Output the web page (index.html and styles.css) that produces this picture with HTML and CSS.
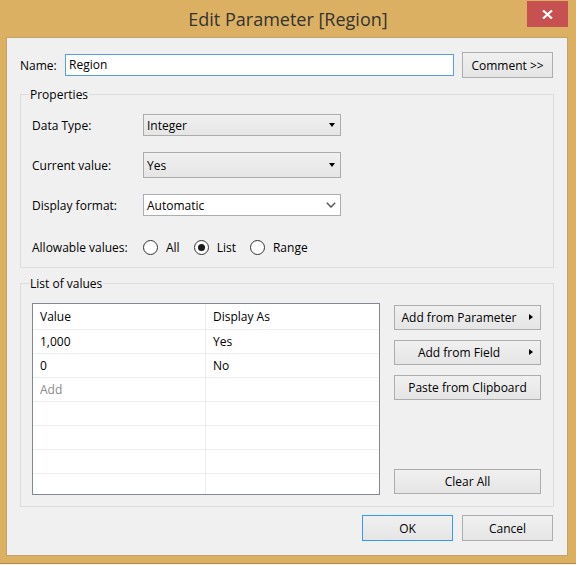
FILE: index.html
```html
<!DOCTYPE html>
<html lang="en">
<head>
    <meta charset="UTF-8">
    <title>Edit Parameter [Region]</title>
    <link rel="stylesheet" href="styles.css">
</head>
<body>
    <div class="window">
        <div class="titlebar">
            <span></span>
            <h1 class="title">Edit Parameter [Region]</h1>
            <div class="caption">
                <div class="close">
                    <svg width="11" height="9" viewBox="0 0 11 9">
                        <path d="M1 0.5 L10 8.5 M10 0.5 L1 8.5" stroke="#fff" stroke-width="2.2" fill="none"/>
                    </svg>
                </div>
            </div>
        </div>

        <div class="client">
            <div class="name-row">
                <span class="name-label">Name:</span>
                <div class="text-input">Region</div>
                <div class="btn comment-btn">Comment &gt;&gt;</div>
            </div>

            <div class="group props">
                <span class="group-title">Properties</span>
                <div class="field row-1">
                    <span class="field-label">Data Type:</span>
                    <div class="select">Integer<i class="caret"></i></div>
                </div>
                <div class="field row-2">
                    <span class="field-label">Current value:</span>
                    <div class="select tall">Yes<i class="caret"></i></div>
                </div>
                <div class="field row-3">
                    <span class="field-label">Display format:</span>
                    <div class="select combo">Automatic
                        <svg class="chevron" width="10" height="6" viewBox="0 0 10 6">
                            <path d="M0.8 0.8 L5 5 L9.2 0.8" stroke="#5a5a5a" stroke-width="1.5" fill="none"/>
                        </svg>
                    </div>
                </div>
                <div class="field row-4">
                    <span class="field-label">Allowable values:</span>
                    <div class="radios">
                        <span class="radio-item"><i class="radio"></i>All</span>
                        <span class="radio-item"><i class="radio checked"></i>List</span>
                        <span class="radio-item"><i class="radio"></i>Range</span>
                    </div>
                </div>
            </div>

            <div class="group values">
                <span class="group-title">List of values</span>
                <div class="grid">
                    <div class="grid-row head">
                        <span class="cell">Value</span>
                        <span class="cell">Display As</span>
                    </div>
                    <div class="grid-row">
                        <span class="cell">1,000</span>
                        <span class="cell">Yes</span>
                    </div>
                    <div class="grid-row">
                        <span class="cell">0</span>
                        <span class="cell">No</span>
                    </div>
                    <div class="grid-row">
                        <span class="cell hint">Add</span>
                        <span class="cell"></span>
                    </div>
                    <div class="grid-row"><span class="cell"></span><span class="cell"></span></div>
                    <div class="grid-row"><span class="cell"></span><span class="cell"></span></div>
                    <div class="grid-row"><span class="cell"></span><span class="cell"></span></div>
                    <div class="grid-row"><span class="cell"></span><span class="cell"></span></div>
                </div>
                <div class="side-buttons">
                    <div class="btn menu-btn">Add from Parameter<i class="arrow"></i></div>
                    <div class="btn menu-btn">Add from Field<i class="arrow"></i></div>
                    <div class="btn">Paste from Clipboard</div>
                    <div class="btn clear-btn">Clear All</div>
                </div>
            </div>

            <div class="footer">
                <div class="btn dialog-btn default">OK</div>
                <div class="btn dialog-btn">Cancel</div>
            </div>
        </div>
    </div>
</body>
</html>
```

FILE: styles.css
```css
* {
    box-sizing: border-box;
}
body {
    margin: 0;
    background: #f7f7f7;
    font-family: "Open Sans", "Noto Sans", sans-serif;
    font-size: 12px;
    color: #000;
}
.window {
    width: 576px;
    height: 564px;
    background: #dcb062;
    border-bottom: 1px solid #b08a4c;
}

/* title bar */
.titlebar {
    height: 37px;
    display: grid;
    grid-template-columns: 1fr auto 1fr;
}
.title {
    margin: 0;
    font-weight: normal;
    font-size: 18px;
    line-height: 38px;
    color: #333;
    white-space: nowrap;
}
.caption {
    justify-self: end;
    margin: 1px 8px 0 0;
}
.close {
    width: 41px;
    height: 26px;
    background: #c75050;
    display: flex;
    align-items: center;
    justify-content: center;
}

/* dialog body */
.client {
    margin: 0 8px 0 6px;
    height: 519px;
    background: #f0f0f0;
    border: 1px solid #c2a367;
    padding: 14px 13px 0;
}
.name-row {
    display: flex;
    align-items: center;
    height: 26px;
}
.name-label {
    width: 45px;
}
.text-input {
    width: 389px;
    height: 22px;
    background: #fff;
    border: 1px solid #569de5;
    padding-left: 3px;
    line-height: 20px;
}
.btn {
    border: 1px solid #adadad;
    background: linear-gradient(#f0f0f0, #e5e5e5);
    display: flex;
    align-items: center;
    justify-content: center;
    white-space: nowrap;
}
.comment-btn {
    width: 91px;
    height: 26px;
    margin-left: 8px;
}

/* group boxes */
.group {
    position: relative;
    border: 1px solid #dcdcdc;
}
.group-title {
    position: absolute;
    top: -8px;
    left: 8px;
    padding: 0 1px;
    background: #f0f0f0;
    line-height: 16px;
}
.props {
    margin-top: 16px;
    padding: 19px 0 12px 11px;
}
.field {
    display: flex;
    align-items: center;
}
.field-label {
    width: 111px;
}
.row-2, .row-3 {
    margin-top: 16px;
}
.row-4 {
    margin-top: 23px;
    height: 16px;
}
.select {
    width: 198px;
    height: 22px;
    border: 1px solid #acacac;
    background: linear-gradient(#f0f0f0, #e5e5e5);
    padding: 0 5px 0 3px;
    display: flex;
    align-items: center;
    justify-content: space-between;
}
.select.tall {
    height: 26px;
}
.select.combo {
    background: #fff;
    border-color: #abadb3;
    padding-right: 4px;
}
.caret {
    border-top: 4px solid #000;
    border-left: 3.5px solid transparent;
    border-right: 3.5px solid transparent;
}
.radios {
    display: flex;
    gap: 14px;
}
.radio-item {
    display: flex;
    align-items: center;
    gap: 8px;
}
.radio {
    width: 15px;
    height: 15px;
    border: 1px solid #333;
    border-radius: 50%;
    background: #fff;
    display: flex;
    align-items: center;
    justify-content: center;
}
.radio.checked::after {
    content: "";
    width: 7px;
    height: 7px;
    border-radius: 50%;
    background: #1a1a1a;
}

/* list of values */
.values {
    margin-top: 15px;
    padding: 19px 12px 11px 11px;
    display: flex;
    gap: 14px;
}
.grid {
    width: 348px;
    height: 192px;
    border: 1px solid #828790;
    background: #fff;
    overflow: hidden;
}
.grid-row {
    display: grid;
    grid-template-columns: 173px 1fr;
    height: 24px;
    border-bottom: 1px solid #ececec;
}
.grid-row.head {
    height: 26px;
}
.cell {
    padding-left: 7px;
    display: flex;
    align-items: center;
}
.cell:first-child {
    border-right: 1px solid #ececec;
}
.hint {
    color: #8a8a8a;
}
.side-buttons {
    width: 147px;
    display: flex;
    flex-direction: column;
    gap: 10px;
    padding: 2px 0 1px;
}
.side-buttons .btn {
    height: 25px;
}
.menu-btn {
    position: relative;
    padding-right: 17px;
}
.arrow {
    position: absolute;
    right: 7px;
    top: 8px;
    border-left: 4px solid #000;
    border-top: 3.5px solid transparent;
    border-bottom: 3.5px solid transparent;
}
.clear-btn {
    margin-top: auto;
}

/* OK / Cancel */
.footer {
    display: flex;
    justify-content: flex-end;
    gap: 9px;
    margin: 8px 1px 0 0;
}
.dialog-btn {
    width: 91px;
    height: 26px;
}
.dialog-btn.default {
    border-color: #3399ff;
}
```
